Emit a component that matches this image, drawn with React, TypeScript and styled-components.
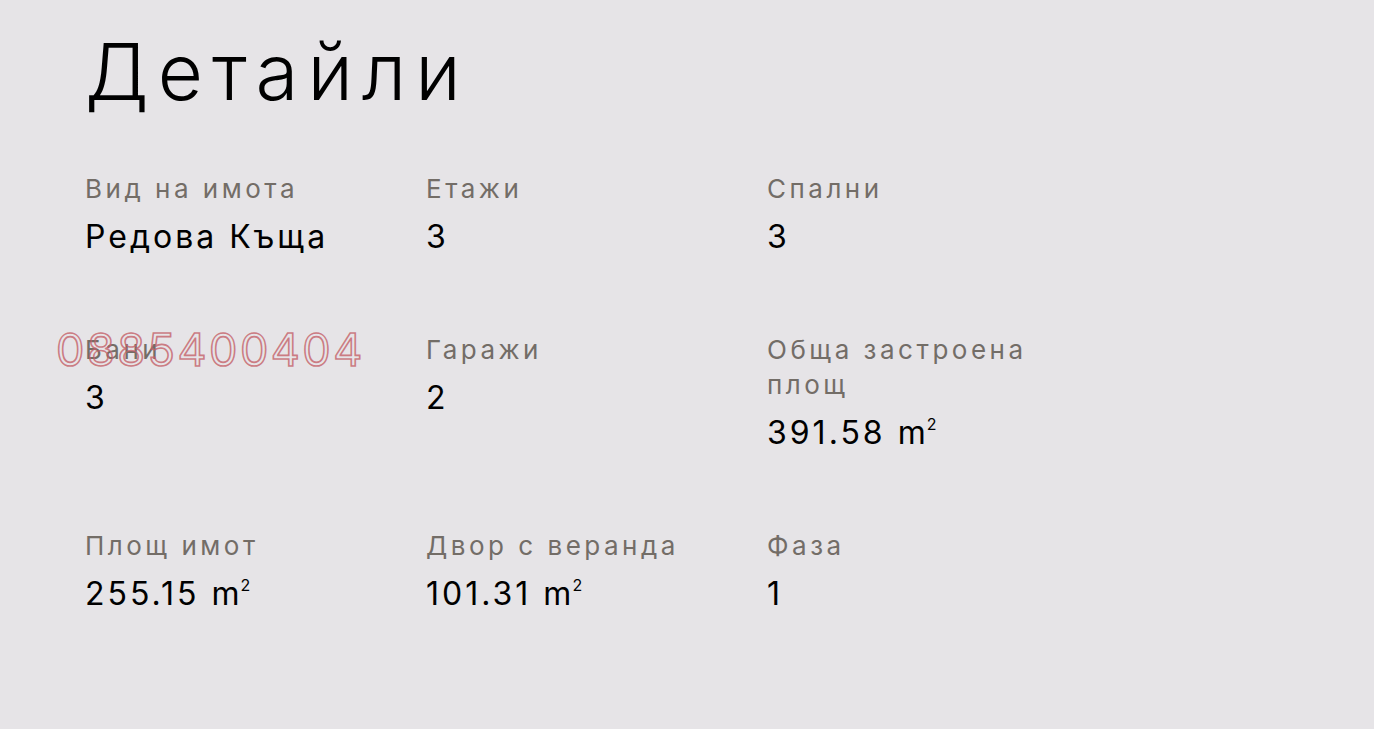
import React from 'react';
import styled, { createGlobalStyle } from 'styled-components';

type Detail = {
    label: string;
    value: string;
    unit?: boolean;
};

const details: Detail[] = [
    { label: 'Вид на имота', value: 'Редова Къща' },
    { label: 'Етажи', value: '3' },
    { label: 'Спални', value: '3' },
    { label: 'Бани', value: '3' },
    { label: 'Гаражи', value: '2' },
    { label: 'Обща застроена площ', value: '391.58 m', unit: true },
    { label: 'Площ имот', value: '255.15 m', unit: true },
    { label: 'Двор с веранда', value: '101.31 m', unit: true },
    { label: 'Фаза', value: '1' },
];

const App = () => {
    return (
        <>
            <GlobalStyle />
            <Page>
                <Title>Детайли</Title>
                <Grid>
                    {details.map((d, i) => (
                        <Item key={d.label}>
                            {i === 3 && <Watermark>0885400404</Watermark>}
                            <Label>{d.label}</Label>
                            <Value>
                                {d.value}
                                {d.unit && <Sup>2</Sup>}
                            </Value>
                        </Item>
                    ))}
                </Grid>
            </Page>
        </>
    );
};

const GlobalStyle = createGlobalStyle`
  html, body {
    margin: 0;
    padding: 0;
    background: #e6e4e7;
  }
  body {
    font-family: Inter, "Noto Sans", sans-serif;
  }
`;

const Page = styled.div`
  min-height: 729px;
  padding: 22px 0 0 85px;
  box-sizing: border-box;
  background: #e6e4e7;
`;

const Title = styled.h1`
  margin: 0;
  font-size: 78px;
  line-height: 100px;
  font-weight: 300;
  color: #000;
  letter-spacing: 9px;
`;

const Grid = styled.div`
  display: grid;
  grid-template-columns: repeat(3, 341px);
  row-gap: 74px;
  margin-top: 49px;
`;

const Item = styled.div`
  position: relative;
  padding-right: 40px;
`;

const Label = styled.div`
  font-size: 26px;
  line-height: 35px;
  color: #736d67;
  font-weight: 400;
  letter-spacing: 3.5px;
`;

const Value = styled.div`
  margin-top: 10px;
  font-size: 32px;
  line-height: 42px;
  color: #000;
  font-weight: 400;
  letter-spacing: 3px;
`;

const Sup = styled.sup`
  font-size: 16px;
  vertical-align: 14px;
  line-height: 0;
  margin-left: -2px;
  letter-spacing: 0;
`;

const Watermark = styled.div`
  position: absolute;
  left: -29px;
  top: -5px;
  font-size: 45px;
  line-height: 45px;
  font-weight: 400;
  color: transparent;
  -webkit-text-stroke: 1.6px rgba(196, 96, 104, 0.8);
  letter-spacing: 2.5px;
  pointer-events: none;
  white-space: nowrap;
`;

export default App;
